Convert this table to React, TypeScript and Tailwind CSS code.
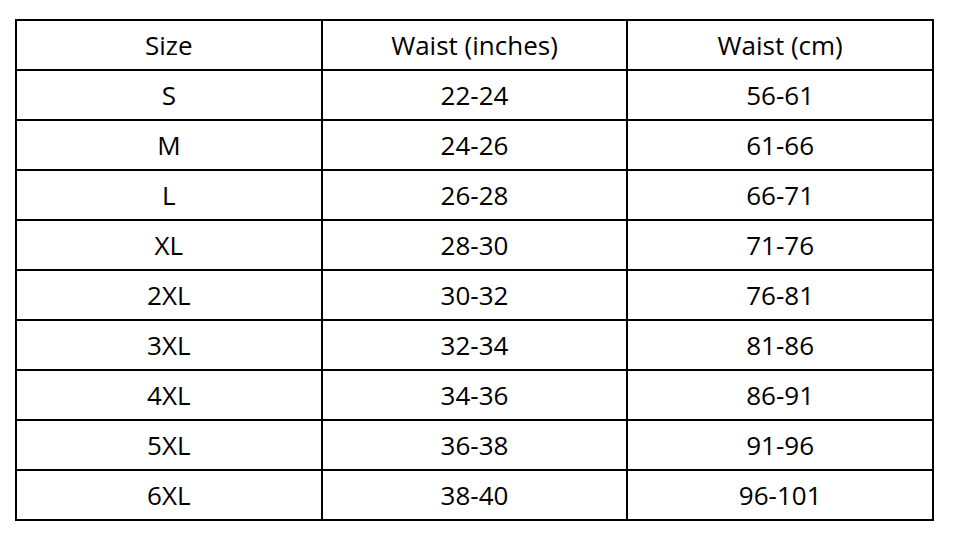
import React from 'react';

const ROWS: [string, string, string][] = [
  ['S', '22-24', '56-61'],
  ['M', '24-26', '61-66'],
  ['L', '26-28', '66-71'],
  ['XL', '28-30', '71-76'],
  ['2XL', '30-32', '76-81'],
  ['3XL', '32-34', '81-86'],
  ['4XL', '34-36', '86-91'],
  ['5XL', '36-38', '91-96'],
  ['6XL', '38-40', '96-101'],
];

const Cell: React.FC<{ children: React.ReactNode }> = ({ children }) => (
  <td className="border-2 border-black h-[50px] p-0 pb-[1px] text-center align-middle leading-none">{children}</td>
);

const App: React.FC = () => {
  return (
    <div className="w-[954px] h-[534px] bg-white pl-[15px] pt-[19px] font-['Open_Sans',sans-serif] text-[26px] text-black">
      <table className="border-collapse w-[919px] table-fixed">
        <tbody>
          <tr>
            <Cell>Size</Cell>
            <Cell>Waist (inches)</Cell>
            <Cell>Waist (cm)</Cell>
          </tr>
          {ROWS.map((row) => (
            <tr key={row[0]}>
              <Cell>{row[0]}</Cell>
              <Cell>{row[1]}</Cell>
              <Cell>{row[2]}</Cell>
            </tr>
          ))}
        </tbody>
      </table>
    </div>
  );
};

export default App;
